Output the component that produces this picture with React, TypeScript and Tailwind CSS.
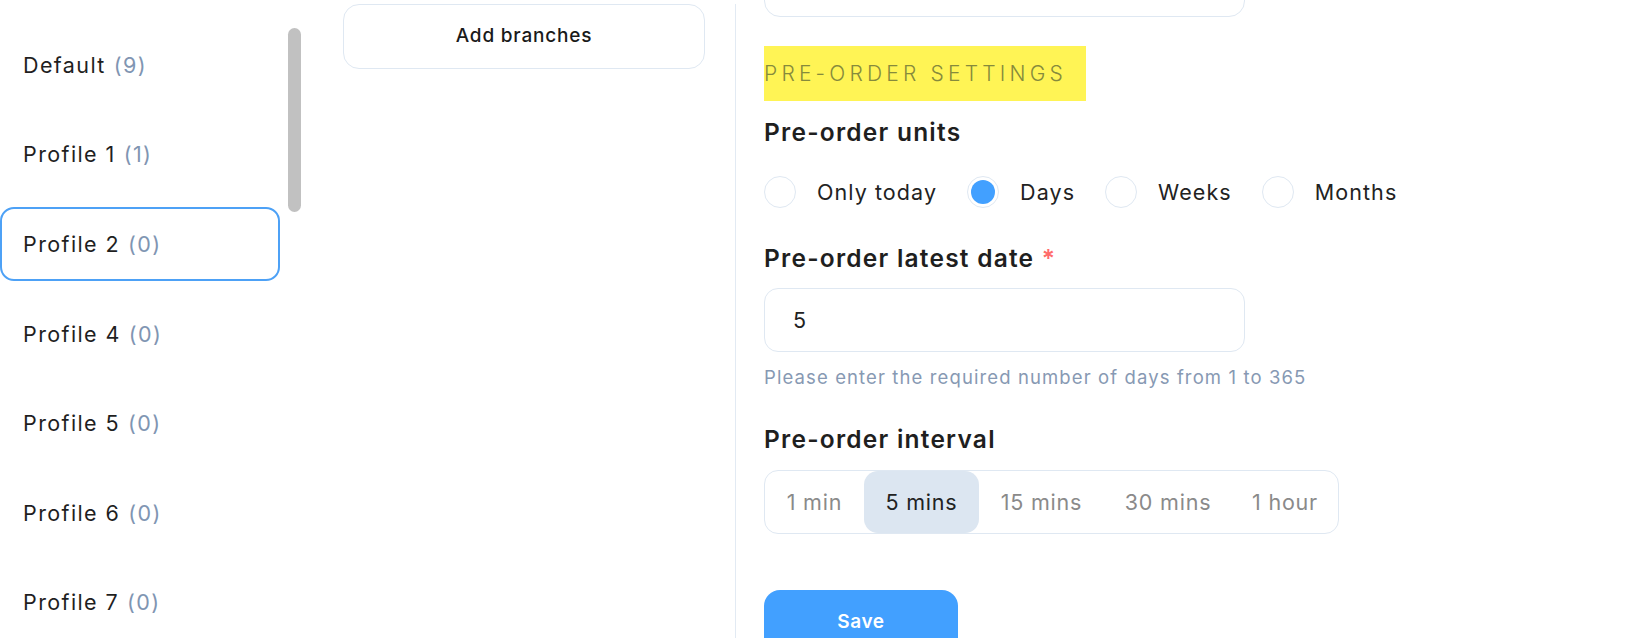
import { useState } from 'react'

const profiles = [
  { name: 'Default', count: 9 },
  { name: 'Profile 1', count: 1 },
  { name: 'Profile 2', count: 0 },
  { name: 'Profile 4', count: 0 },
  { name: 'Profile 5', count: 0 },
  { name: 'Profile 6', count: 0 },
  { name: 'Profile 7', count: 0 },
]

const units = ['Only today', 'Days', 'Weeks', 'Months']

const intervals = [
  { label: '1 min', w: 'w-[99px]' },
  { label: '5 mins', w: 'w-[115px]' },
  { label: '15 mins', w: 'w-[125px]' },
  { label: '30 mins', w: 'w-[128px]' },
  { label: '1 hour', w: 'w-[106px]' },
]

export default function App() {
  const [selected, setSelected] = useState('Profile 2')
  const [unit, setUnit] = useState('Days')
  const [interval, setInterval] = useState('5 mins')
  const [latest, setLatest] = useState('5')

  return (
    <div className="h-[638px] w-[1634px] overflow-hidden bg-white flex items-start text-[#1f1f1f] tracking-[0.05em] [font-family:Inter,sans-serif]">
      {/* Profiles */}
      <div className="flex pt-[28px]">
        <div className="w-[280px] flex flex-col gap-[15.6px]">
          {profiles.map((p) => (
            <button
              key={p.name}
              onClick={() => setSelected(p.name)}
              className={`h-[74px] shrink-0 rounded-[14px] border-2 text-left pl-[21px] text-[21.5px] tracking-[0.065em] flex items-center ${
                selected === p.name ? 'border-[#4da1f6]' : 'border-transparent'
              }`}
            >
              {p.name}
              <span className="ml-[8px] text-[#8095b2]">({p.count})</span>
            </button>
          ))}
        </div>
        <div className="ml-[8px] w-[13px] h-[184px] rounded-full bg-[#c1c1c1]" />
      </div>

      {/* Branches */}
      <div className="ml-[42px] pt-[4px]">
        <button className="w-[362px] h-[65px] rounded-[16px] border border-[#dfe8f2] text-[19px] font-medium text-[#1a1a1a]">
          Add branches
        </button>
      </div>

      <div className="ml-[30px] mt-[4px] w-px h-[634px] bg-[#e2eaf3]" />

      {/* Settings */}
      <div className="pl-[28px] flex flex-col items-start">
        <div className="-mt-[44px] h-[61px] w-[481px] shrink-0 rounded-[16px] border border-[#dfe8f2]" />

        <div className="mt-[29px] h-[55px] w-[322px] shrink-0 bg-[#fff455] flex items-center text-[21px] font-light tracking-[0.2em] text-[#868a3c]">
          PRE-ORDER SETTINGS
        </div>

        <h3 className="mt-[16px] h-[30px] leading-[30px] text-[24.5px] font-semibold tracking-[0.05em]">Pre-order units</h3>

        <div className="mt-[29px] h-[32px] flex items-center">
          {units.map((u, i) => (
            <label
              key={u}
              onClick={() => setUnit(u)}
              className={`flex items-center cursor-pointer ${i > 0 ? 'ml-[30px]' : ''}`}
            >
              <span className="w-[32px] h-[32px] rounded-full border border-[#dfe8f2] flex items-center justify-center">
                {unit === u && <span className="w-[24px] h-[24px] rounded-full bg-[#42a0ff]" />}
              </span>
              <span className="ml-[21px] text-[21.5px] tracking-[0.05em] text-[#222]">{u}</span>
            </label>
          ))}
        </div>

        <h3 className="mt-[35px] h-[30px] leading-[30px] text-[24.5px] font-semibold tracking-[0.05em]">
          Pre-order latest date <span className="text-[#ff6b6b]">*</span>
        </h3>

        <input
          value={latest}
          onChange={(e) => setLatest(e.target.value)}
          className="mt-[15px] h-[64px] w-[481px] shrink-0 rounded-[14px] border border-[#dfe8f2] pl-[28px] text-[21.5px] text-[#222] outline-none"
        />

        <p className="mt-[13px] h-[24px] leading-[24px] text-[18.5px] tracking-[0.06em] text-[#8799b3]">
          Please enter the required number of days from 1 to 365
        </p>

        <h3 className="mt-[35px] h-[30px] leading-[30px] text-[24.5px] font-semibold tracking-[0.05em]">Pre-order interval</h3>

        <div className="mt-[16px] h-[64px] shrink-0 rounded-[14px] border border-[#dfe8f2] flex">
          {intervals.map((it) => (
            <button
              key={it.label}
              onClick={() => setInterval(it.label)}
              className={`${it.w} h-full rounded-[14px] text-[21.5px] ${
                interval === it.label ? 'bg-[#dce6f1] text-[#222]' : 'text-[#8a8a8a]'
              }`}
            >
              {it.label}
            </button>
          ))}
        </div>

        <button className="mt-[56px] h-[64px] w-[194px] shrink-0 rounded-[16px] bg-[#42a0ff] text-white text-[19px] font-semibold tracking-[0.03em]">
          Save
        </button>
      </div>
    </div>
  )
}
